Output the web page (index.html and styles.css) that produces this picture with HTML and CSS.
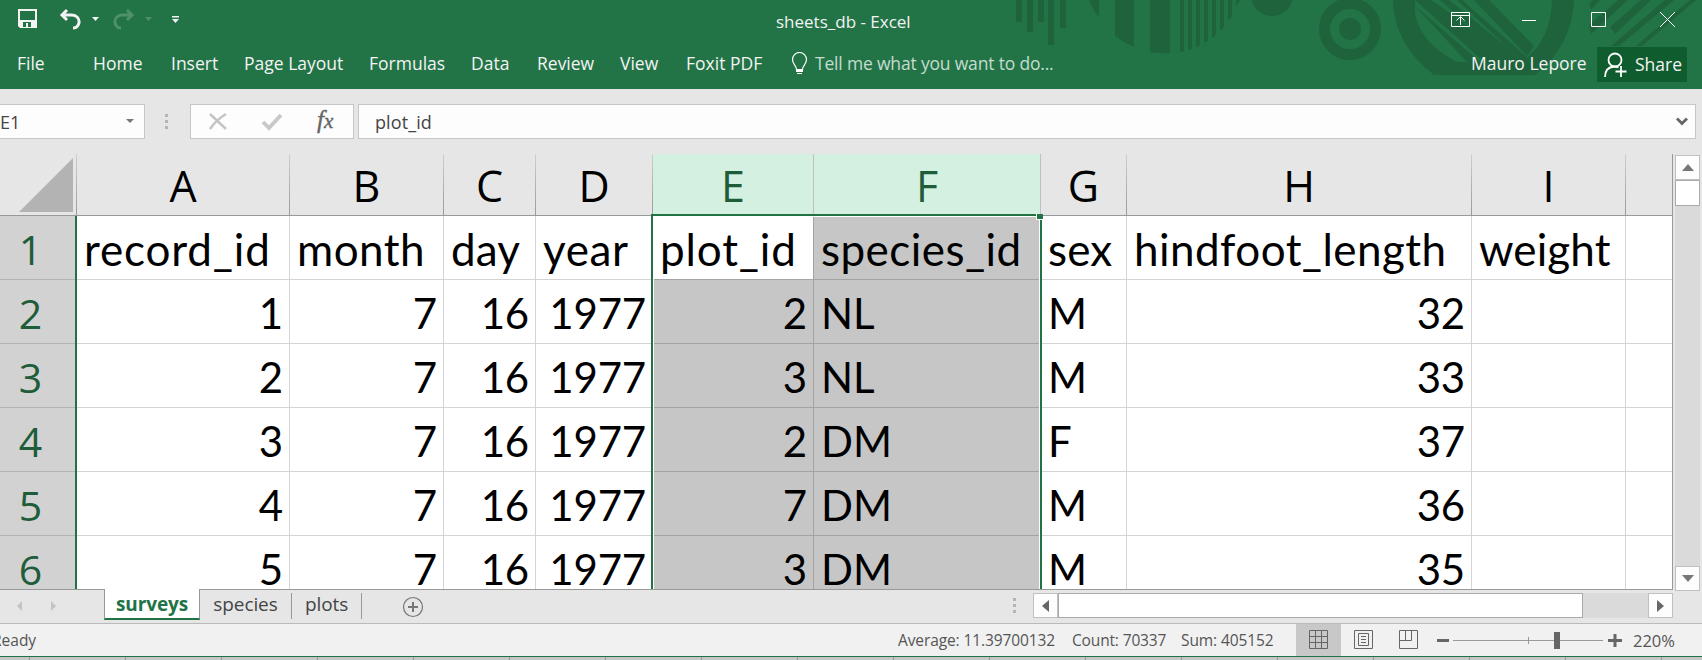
FILE: index.html
```html
<!DOCTYPE html>
<html lang="en">
<head>
<meta charset="utf-8">
<title>sheets_db - Excel</title>
<link rel="stylesheet" href="styles.css">
</head>
<body>
<div class="app">
  <header class="head">
    <svg class="pattern" width="702" height="89" viewBox="0 0 702 89" fill="#1e633c">
      <path d="M16 0h6v22h-6zM27 0h6v32h-6zM38 0h6v22h-6zM48 0h6v45h-6zM60 0h6v28h-6z"/>
      <path d="M89 0h10v18Q93 10 89 0zM115 0h19v47q-10-4-19-11zM150 0h20v53q-10 1-20-1zM180 0h4v51l-4 1zM188 0h4v49l-4 1zM196 0h4v45l-4 2zM204 0h4v41l-4 2zM212 0h4v35l-4 3zM220 0h4v27l-4 4zM228 0h4v16l-4 5zM236 0h4l-4 7z"/>
      <circle cx="272" cy="-5" r="21"/>
      <circle cx="350" cy="29" r="25.500" fill="none" stroke="#1e633c" stroke-width="11"/>
      <circle cx="350" cy="29" r="11"/>
      <path fill-rule="evenodd" d="M393 0h181q-2 46-39 75H434Q394 44 393 0zM415 0v13q5 30 42 49h12L415 13zM415 0v13l54 49h52q30-20 31-62z"/>
      <path d="M413 4l67 58h-13zM415 0h16l90 62-10 6h-20zM440 0h9l75 61-8 5zM457 0h5l66 58-5 4zM474 0h15l45 46-7 10z"/>
      <path d="M589 3l5-3h6l-9 10zM589 25L618 0h10l-37 34zM610 27L641 0h10l-36 34zM611 46L665 0h9l-55 46zM636 46L690 0h6l-54 46z"/>
    </svg>
    <div class="titlebar">
      <svg class="qat" width="200" height="40" viewBox="0 0 200 40">
        <path fill="#f3f3f3" fill-rule="evenodd" d="M18 9h19v19H20l-2-2zM20 11v9h15v-9zM23 22v5h3v-4h2v4h3v-5z"/>
        <g fill="none" stroke="#f3f3f3" stroke-width="3"><path d="M67 10l-5 5 5 5M62 15h9c11 0 10 13 2 13"/></g>
        <path fill="#f3f3f3" d="M92 17h7l-3.500 4z"/>
        <g fill="none" stroke="#4e9068" stroke-width="3"><path d="M127 10l5 5-5 5M132 15h-9c-11 0-10 13-2 13"/></g>
        <path fill="#4e9068" d="M145 17h7l-3.500 4z"/>
        <path fill="#f3f3f3" d="M172 16h7v1.500h-7zM172 19h7l-3.500 4z"/>
      </svg>
      <span class="t title">sheets_db - Excel</span>
      <svg class="winbtns" width="252" height="40" viewBox="0 0 252 40" fill="none" stroke="#fff">
        <path d="M1.500 12.500h18v14h-18zM1.500 15.500h18M10.500 25v-8M6.500 20.500l4-4 4 4"/>
        <path d="M72 20.500h14M141.500 12.500h14v14h-14zM210 12l15 15M225 12l-15 15"/>
      </svg>
    </div>
    <nav class="menu">
      <span class="t m-file">File</span><span class="t m-home">Home</span><span class="t m-insert">Insert</span><span class="t m-page">Page Layout</span><span class="t m-form">Formulas</span><span class="t m-data">Data</span><span class="t m-review">Review</span><span class="t m-view">View</span><span class="t m-foxit">Foxit PDF</span>
      <svg class="bulb" width="18" height="25" viewBox="0 0 18 25"><path d="M5.500 17.500c0-4-4-5-4-10a6.500 6.500 0 0 1 14 0c0 5-4 6-4 10z" fill="none" stroke="#fff" stroke-width="1.200"/><path fill="#fff" d="M5 17h7v3H5zM6 21h5v1H6z"/></svg>
      <span class="t tell">Tell me what you want to do...</span>
      <span class="t user">Mauro Lepore</span>
      <div class="share"><svg width="24" height="26" viewBox="0 0 24 26" fill="none" stroke="#fff" stroke-width="1.800"><circle cx="11" cy="8" r="6.500"/><path d="M1 25c0-7 4-10 9-10.500 2 0 3 .3 4.500 1M17 14v11M11.500 19.500h11"/></svg><span class="t">Share</span></div>
    </nav>
  </header>

  <div class="fbar">
    <div class="namebox"><span class="t">E1</span><svg width="9" height="6"><path fill="#777" d="M0 0h8L4 4z"/></svg></div>
    <div class="dots"><i></i><i></i><i></i></div>
    <div class="fbtns">
      <svg width="162" height="34" viewBox="0 0 162 34" fill="none">
        <path d="M19 9l16 15M35 9Q25 15 19 24" stroke="#c4c4c4" stroke-width="2.400"/>
        <path d="M72 17l6 6 12-13" stroke="#c8c8c8" stroke-width="3.800"/>
      </svg>
      <span class="fx">f<small>x</small></span>
    </div>
    <div class="formula"><span class="t">plot_id</span><svg width="12" height="9"><path d="M1 1.500l5 5 5-5" fill="none" stroke="#666" stroke-width="2.800"/></svg></div>
  </div>

  <div class="main">
    <div class="sheet">
      <div class="row hrow"><div class="corner"><svg width="54" height="54"><path fill="#b3b3b3" d="M54 0v54H0z"/></svg></div><div>A</div><div>B</div><div>C</div><div>D</div><div class="on">E</div><div class="on">F</div><div>G</div><div>H</div><div>I</div><div></div></div>
      <div class="row names"><div class="rh">1</div><div class="w1">record_id</div><div class="w2">month</div><div class="w3">day</div><div class="w4">year</div><div class="w1 act">plot_id</div><div class="w2 sel">species_id</div><div class="w3">sex</div><div class="w2">hindfoot_length</div><div class="w3">weight</div><div></div></div>
      <div class="row"><div class="rh">2</div><div class="n">1</div><div class="n">7</div><div class="n">16</div><div class="n">1977</div><div class="n sel">2</div><div class="sel">NL</div><div>M</div><div class="n">32</div><div></div><div></div></div>
      <div class="row"><div class="rh">3</div><div class="n">2</div><div class="n">7</div><div class="n">16</div><div class="n">1977</div><div class="n sel">3</div><div class="sel">NL</div><div>M</div><div class="n">33</div><div></div><div></div></div>
      <div class="row"><div class="rh">4</div><div class="n">3</div><div class="n">7</div><div class="n">16</div><div class="n">1977</div><div class="n sel">2</div><div class="sel">DM</div><div>F</div><div class="n">37</div><div></div><div></div></div>
      <div class="row"><div class="rh">5</div><div class="n">4</div><div class="n">7</div><div class="n">16</div><div class="n">1977</div><div class="n sel">7</div><div class="sel">DM</div><div>M</div><div class="n">36</div><div></div><div></div></div>
      <div class="row last"><div class="rh">6</div><div class="n">5</div><div class="n">7</div><div class="n">16</div><div class="n">1977</div><div class="n sel">3</div><div class="sel">DM</div><div>M</div><div class="n">35</div><div></div><div></div></div>
      <div class="rowedge"></div>
      <div class="selection"><i></i></div>
    </div>
    <div class="vscroll">
      <div class="sb"><svg width="12" height="7"><path fill="#777" d="M0 7h12L6 0z"/></svg></div>
      <div class="vthumb"></div>
      <div class="sb vdown"><svg width="12" height="7"><path fill="#777" d="M0 0h12L6 7z"/></svg></div>
    </div>
  </div>

  <div class="tabs">
    <svg class="tabnav" width="104" height="33"><path fill="#c3c3c3" d="M22 12v10l-5-5zM51 12v10l5-5z"/></svg>
    <div class="tab active"><span class="t">surveys</span></div>
    <div class="tab tspecies"><span class="t">species</span></div>
    <div class="tab tplots"><span class="t">plots</span></div>
    <svg class="plus" width="22" height="22" fill="none" stroke="#777"><circle cx="11" cy="11" r="9.500" stroke-width="1.200"/><path d="M6 11h10M11 6v10" stroke-width="2"/></svg>
    <div class="dots small"><i></i><i></i><i></i></div>
    <div class="hscroll"><div class="sb"><svg width="7" height="12"><path fill="#666" d="M7 0v12L0 6z"/></svg></div><div class="hthumb"></div><div class="sb hright"><svg width="7" height="12"><path fill="#666" d="M0 0v12l7-6z"/></svg></div></div>
  </div>

  <footer class="status">
    <span class="t s-ready">Ready</span>
    <span class="t s-avg">Average: 11.39700132</span><span class="t s-count">Count: 70337</span><span class="t s-sum">Sum: 405152</span>
    <div class="viewbtns">
      <div class="vb von"><svg width="20" height="20" fill="none" stroke="#666"><path d="M.5.5h18v18H.5zM.5 6.500h18M.5 12.500h18M6.500.5v18M12.500.5v18"/></svg></div>
      <div class="vb"><svg width="20" height="20" fill="none" stroke="#666"><path d="M.5.5h18v18H.5zM4.500 3.500h10v12h-10zM7 6.500h5M7 9.500h5M7 12.500h5"/></svg></div>
      <div class="vb"><svg width="20" height="20" fill="none" stroke="#666"><path d="M.5.5h18v18H.5zM.5 10.500h12M6.500.5v10M12.500.5v10"/></svg></div>
    </div>
    <svg class="zoom" width="190" height="31" fill="none"><path d="M1 15.500h12M172 15.500h14M179 9v13" stroke="#666" stroke-width="3"/><path d="M17 15.500h150M92.500 12v7" stroke="#999"/><path fill="#666" d="M118 7h6v17h-6z"/></svg>
    <span class="t s-zoom">220%</span>
  </footer>
  <div class="behind"></div>
</div>
</body>
</html>
```
FILE: styles.css
```css
* { box-sizing: border-box; }
body { margin: 0; overflow: hidden; background: #e6e6e6; font-family: "Open Sans", "Noto Sans", sans-serif; }
svg { display: block; flex: none; }
.app { width: 1702px; height: 660px; display: flex; flex-direction: column; overflow: hidden; }
.t { white-space: nowrap; display: block; flex: none; }

.head { position: relative; height: 89px; flex: none; background: #227447; color: #f3f3f3; }
.pattern { position: absolute; left: 1000px; top: 0; }
.titlebar { position: relative; display: flex; height: 40px; }
.title { margin-left: 576px; line-height: 44px; font-size: 17px; width: 134px; }
.winbtns { margin-left: 540px; }
.menu { position: relative; display: flex; align-items: center; height: 49px; font-size: 17.500px; line-height: 45px; padding-left: 17px; }
.menu > .t { margin-bottom: 3px; }
.m-file { width: 76px; } .m-home { width: 78px; } .m-insert { width: 73px; } .m-page { width: 125px; }
.m-form { width: 102px; } .m-data { width: 66px; } .m-review { width: 83px; } .m-view { width: 66px; } .m-foxit { width: 105px; }
.bulb { margin: 0 6px 0 0; }
.tell { color: #c4dccf; width: 656px; letter-spacing: -.18px; }
.user { width: 126px; }
.share { display: flex; flex: none; align-items: center; gap: 7px; width: 90px; height: 35px; padding-left: 7px; background: #0f5c2f; line-height: 34px; }
.share .t { margin-bottom: 1px; }

.fbar { display: flex; align-items: center; height: 65px; flex: none; color: #444; font-size: 18px; }
.namebox, .fbtns, .formula { height: 35px; border: 1px solid #c6c6c6; background: #fdfdfd; display: flex; align-items: center; }
.namebox { width: 145px; border-left: 0; justify-content: space-between; padding: 0 9px 0 0; }
.dots { display: flex; flex-direction: column; gap: 3px; margin-left: 20px; width: 25px; }
.dots i { width: 3px; height: 3px; background: #b4b4b4; }
.fbtns { width: 164px; position: relative; }
.fx { position: absolute; left: 126px; top: 1px; font: italic 25px/28px "Liberation Serif", serif; color: #666; -webkit-text-stroke: .4px #666; }
.fx small { font-size: 21px; }
.formula { width: 1338px; margin-left: 4px; padding: 0 7px 0 16px; justify-content: space-between; }
.formula .t { letter-spacing: .1px; }

.main { display: flex; height: 436px; flex: none; }
.sheet { width: 1673px; height: 436px; overflow: hidden; position: relative; background: #fff; border-right: 1px solid #999; border-bottom: 1px solid #999; }
.row { display: grid; grid-template-columns: 77px 213px 154px 92px 117px 161px 227px 86px 345px 154px 47px; grid-template-rows: 100%; height: 64px; width: 1673px; font: 42px/40px Lato, sans-serif; color: #000; }
.row > div { border-right: 1px solid #d4d4d4; border-bottom: 1px solid #d4d4d4; padding: 13px 7px 0; white-space: nowrap; }
.last { height: 55px; }
.last > div { border-bottom: 0; }
.names { font-size: 44px; }
.w1 { letter-spacing: .85px; } .w2 { letter-spacing: .45px; } .w3 { letter-spacing: .1px; } .w4 { letter-spacing: .6px; }
.row > .n { text-align: right; padding-right: 6px; letter-spacing: -.2px; }
.row > .sel { background: #c6c6c6; border-color: #a3a3a3; }
.row > .act { border-color: #a3a3a3; }
.row > .rh { background: #d2d2d2; color: #1e5c3a; text-align: center; padding: 13px 15px 0 0; border-color: #b4b4b4; font-family: "Open Sans", sans-serif; font-size: 41px; }
.row.hrow { height: 62px; font: 43px/64px "Open Sans", sans-serif; background: #e6e6e6; }
.hrow > div { padding: 0; text-align: center; border-bottom-color: #999; border-right: 1px solid; border-image: linear-gradient(#d0d0d0, #999) 1; }
.row.hrow > div { padding: 0; border-bottom-color: #999; }
.row.hrow > .on { background: #d3f0e0; color: #1e5c3a; border-image: none; border-right-color: #c0c0c0; }
.row.hrow > .corner { padding: 4px 0 0 19px; }
.rowedge { position: absolute; left: 75px; top: 62px; width: 2px; height: 374px; background: #217346; }
.selection { position: absolute; left: 651px; top: 60px; width: 391px; height: 400px; border: 2px solid #217346; box-shadow: inset 0 0 0 1px #fff; }
.selection i { position: absolute; right: -3px; top: -2px; width: 7px; height: 6px; background: #217346; border: solid #fff; border-width: 0 0 1px 1px; }

.vscroll { width: 25px; margin: 1px 0 0 2px; height: 436px; background: #dadada; display: flex; flex-direction: column; }
.sb { width: 25px; height: 25px; background: #fdfdfd; border: 1px solid #c0c0c0; display: flex; align-items: center; justify-content: center; flex: none; }
.vthumb { height: 26px; background: #fff; border: 1px solid #aaa; }
.vdown { margin-top: auto; }

.tabs { display: flex; height: 35px; flex: none; border-bottom: 1px solid #bababa; color: #444; font-size: 19px; line-height: 30px; margin-top: -1px; position: relative; }
.tab { text-align: center; height: 26px; margin-top: 4px; border-right: 1px solid #999; }
.tab .t { margin-top: -4px; }
.tplots .t, .tspecies .t { letter-spacing: -.1px; }
.active { width: 96px; margin-top: 0; height: 31px; background: #fff; border-left: 1px solid #999; border-bottom: 2px solid #217346; color: #217346; font-weight: bold; letter-spacing: -.1px; }
.active .t { margin-top: 0; }
.tspecies { width: 92px; } .tplots { width: 70px; }
.plus { margin: 7px 0 0 40px; }
.tabs .small { margin: 9px 0 0 589px; width: 20px; }
.hscroll { display: flex; width: 640px; height: 25px; margin-top: 4px; background: #dadada; flex: none; }
.hthumb { width: 525px; background: #fff; border: 1px solid #aaa; }
.hright { margin-left: auto; }

.status { display: flex; align-items: center; height: 32px; flex: none; background: #f1f1f1; color: #555; font-size: 15.500px; }
.s-ready { margin-left: -8px; width: 906px; }
.s-avg { width: 174px; letter-spacing: -.1px; } .s-count { width: 109px; letter-spacing: -.15px; } .s-sum { width: 115px; letter-spacing: -.1px; }
.viewbtns { display: flex; height: 32px; }
.vb { width: 45px; display: flex; align-items: center; justify-content: center; }
.von { background: #c8c8c8; }
.zoom { margin-left: 5px; }
.s-zoom { margin-left: 7px; font-size: 16.500px; }
.behind { height: 4px; flex: none; border-top: 1px solid #217346; background: repeating-linear-gradient(to right, transparent 0 29px, #999 29px 30px, transparent 30px 96px) #c6c6c6; }
```
